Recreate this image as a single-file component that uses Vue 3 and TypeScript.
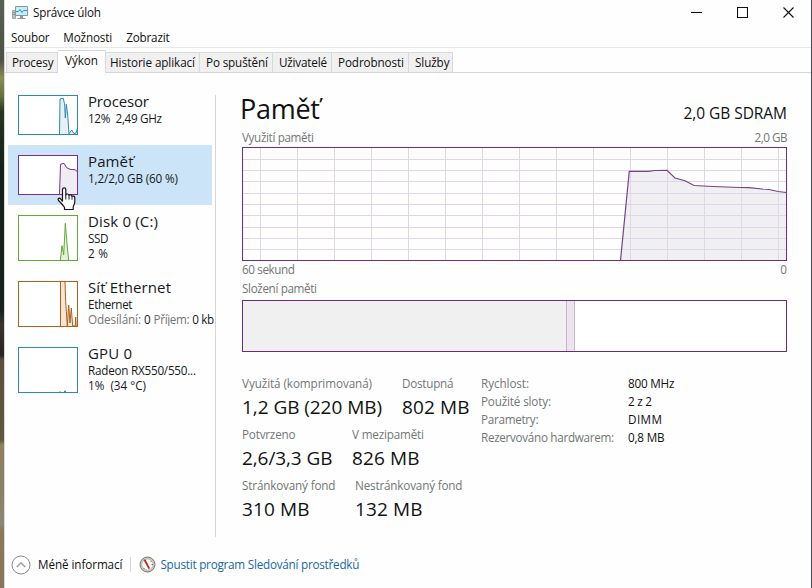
<script setup lang="ts">
import type { Directive } from 'vue'

interface Tab { label: string; width: number; kind: string; active?: boolean }
interface Resource {
  name: string
  nameWidth: number
  lines: { text: string; width: number }[]
  kind: string
  height: number
  line: string
}
interface Fact { label: string; labelWidth: number; value: string; valueWidth: number }

// Spreads the letters of a label over the given advance width.
const vFit: Directive<HTMLElement, number> = {
  mounted(el, binding) {
    const count = Math.max((el.textContent ?? '').length - 1, 1)
    const natural = el.getBoundingClientRect().width
    el.style.letterSpacing = `${(binding.value - natural) / count}px`
  },
}

const tabs: Tab[] = [
  { label: 'Procesy', width: 41.5, kind: 'processes' },
  { label: 'Výkon', width: 33, kind: 'performance', active: true },
  { label: 'Historie aplikací', width: 85, kind: 'history' },
  { label: 'Po spuštění', width: 62, kind: 'startup' },
  { label: 'Uživatelé', width: 48, kind: 'users' },
  { label: 'Podrobnosti', width: 66, kind: 'details' },
  { label: 'Služby', width: 34.5, kind: 'services' },
]

const resources: Resource[] = [
  {
    name: 'Procesor', nameWidth: 61, kind: 'cpu', height: 40,
    lines: [{ text: '12%  2,49 GHz', width: 74 }],
    line: '41.5,39.5 42,4 45.3,3.3 46.7,10 47.3,23 48.3,9.3 49.7,20 51,38.7 53.7,35 56,38.7 58,38 59.5,33',
  },
  {
    name: 'Paměť', nameWidth: 45.5, kind: 'memory', height: 40,
    lines: [{ text: '1,2/2,0 GB (60 %)', width: 90 }],
    line: '41.5,39.5 42.5,9.3 46,8.3 48.7,12.7 52,14.3 57,14.7 59.5,16.7',
  },
  {
    name: 'Disk 0 (C:)', nameWidth: 70, kind: 'disk', height: 46,
    lines: [{ text: 'SSD', width: 20.5 }, { text: '2 %', width: 20 }],
    line: '42.3,45.5 44,30.7 45.7,40 47.3,8.3 49.3,32 50.7,45.5',
  },
  {
    name: 'Síť Ethernet', nameWidth: 83, kind: 'network', height: 46,
    lines: [{ text: 'Ethernet', width: 44.5 }],
    line: '42.5,45.5 42.5,0.5 47,0.5 47.7,20.7 49.3,45 50.7,24 52,42 53.3,27 54.7,45 57.2,45 57.7,36 58.2,45.5',
  },
  {
    name: 'GPU 0', nameWidth: 44, kind: 'gpu', height: 46,
    lines: [{ text: 'Radeon RX550/550...', width: 108 }, { text: '1%  (34 °C)', width: 58 }],
    line: '41,45.5 42,44.5 43,45.5 46,45.5 47,43.7 48,45.5',
  },
]

const gridX = Array.from({ length: 15 }, (_, i) => 18.5 + i * 37)
const gridY = [12.5, 23.5, 34.5, 46.5, 57.5, 68.5, 80.5, 91.5, 102.5]
const usage =
  '378.5,113.5 387.3,24.3 406,24.3 413,23.5 425,23.3 433,31 443,33.7 452,38.5 471,39.5 498,40.5 507,40.7 520,42 527,42.5 536,44.5 544.5,45.5'

const facts: Fact[] = [
  { label: 'Rychlost:', labelWidth: 48, value: '800 MHz', valueWidth: 46.5 },
  { label: 'Použité sloty:', labelWidth: 70, value: '2 z 2', valueWidth: 24 },
  { label: 'Parametry:', labelWidth: 57.5, value: 'DIMM', valueWidth: 34 },
  { label: 'Rezervováno hardwarem:', labelWidth: 133, value: '0,8 MB', valueWidth: 36.5 },
]
</script>

<template>
  <div class="desktop">
    <div class="window">
      <header class="titlebar">
        <svg class="app-icon" width="16" height="14" viewBox="0 0 16 14">
          <path d="M.5 4.5h3v8h-3z" fill="#b9c0c2" stroke="#a0a7a9" />
          <path d="M1 6.5h2M1 8.500h2" stroke="#8d9598" />
          <path d="M3.500.5h12v9h-12z" fill="#c5edf6" stroke="#8797a0" />
          <path d="M4 5.500h2.500l1.500-2 2 3 1.500-2h3.500" fill="none" stroke="#3792b5" />
          <path d="M8 10h3v2h2.500v1h-8v-1H8z" fill="#8d989e" />
        </svg>
        <span v-fit="68" class="caption">Správce úloh</span>
        <div class="controls">
          <svg width="11" height="11" viewBox="0 0 11 11"><path d="M0 5.500h11" /></svg>
          <svg width="11" height="11" viewBox="0 0 11 11"><path d="M.5.5h10v10H.5z" /></svg>
          <svg width="11" height="11" viewBox="0 0 11 11"><path d="M.5.5l10 10M10.500.5l-10 10" /></svg>
        </div>
      </header>

      <nav class="menu">
        <span v-fit="38.5">Soubor</span>
        <span v-fit="49">Možnosti</span>
        <span v-fit="43.5">Zobrazit</span>
      </nav>

      <div class="tabs">
        <div v-for="tab in tabs" :key="tab.kind" class="tab" :class="[tab.kind, { active: tab.active }]">
          <span v-fit="tab.width">{{ tab.label }}</span>
        </div>
      </div>

      <div class="content">
        <aside class="sidebar">
          <div v-for="res in resources" :key="res.kind" class="resource" :class="res.kind">
            <svg class="thumb" width="60" :height="res.height" :viewBox="`0 0 60 ${res.height}`">
              <rect class="thumb-bg" x=".5" y=".5" width="59" :height="res.height - 1" />
              <polygon class="thumb-fill" :points="`${res.line} 59.5,${res.height - 0.5}`" />
              <polyline class="thumb-line" :points="res.line" />
              <rect class="thumb-frame" x=".5" y=".5" width="59" :height="res.height - 1" />
            </svg>
            <div class="resource-text">
              <div class="resource-name"><span v-fit="res.nameWidth">{{ res.name }}</span></div>
              <div v-for="row in res.lines" :key="row.text" class="resource-row">
                <span v-fit="row.width">{{ row.text }}</span>
              </div>
              <div v-if="res.kind === 'network'" class="resource-row traffic">
                <span v-fit="53" class="muted">Odesílání:</span>
                <span>0</span>
                <span v-fit="36" class="muted">Příjem:</span>
                <span v-fit="22">0 kb</span>
              </div>
            </div>
            <svg v-if="res.kind === 'memory'" class="pointer" width="19" height="24" viewBox="0 0 19 24">
              <path
                d="M5.500 14.500V2.500C5.500.4 8.800.4 8.800 2.500V8C9.300 6.500 12 6.700 12 8.500C12.700 7.300 15 7.600 15 9.400C15.800 8.600 17.800 9 17.800 10.800V15C17.800 17 16.500 18 16.200 20V22.500H7.500V20.500C6.500 18.500 4 16 1.500 13.500C.2 11.800 2.100 10.500 3.600 11.800L5.500 14.500"
                fill="#fff" stroke="#15151c" stroke-width="1.200" stroke-linejoin="round"
              />
              <path d="M8.800 8v4.500M12 8.500v4M15 9.400v3.300" fill="none" stroke="#15151c" />
            </svg>
          </div>
        </aside>

        <main class="details-pane">
          <div class="heading">
            <h1><span v-fit="80">Paměť</span></h1>
            <span v-fit="103.500" class="hardware">2,0 GB SDRAM</span>
          </div>
          <div class="row usage-row"><span v-fit="72">Využití paměti</span><span v-fit="33">2,0 GB</span></div>
          <svg class="chart" width="545" height="114" viewBox="0 0 545 114">
            <polygon :points="`${usage} 544.5,113.5`" fill="#f0eff1" />
            <g class="grid">
              <path v-for="x in gridX" :key="'x' + x" :d="`M${x} 1V113`" />
              <path v-for="y in gridY" :key="'y' + y" :d="`M1 ${y}H544`" />
            </g>
            <polyline :points="usage" class="usage-line" />
            <rect x=".5" y=".5" width="544" height="113" class="frame" />
          </svg>
          <div class="row axis-row"><span v-fit="53">60 sekund</span><span>0</span></div>
          <div class="row composition-row"><span v-fit="75">Složení paměti</span></div>
          <div class="composition">
            <div class="in-use"></div>
            <div class="modified"></div>
          </div>

          <div class="numbers">
            <div class="stats">
              <div class="stat-row first">
                <div class="stat"><span v-fit="130" class="stat-label">Využitá (komprimovaná)</span><span v-fit="140" class="stat-value">1,2 GB (220 MB)</span></div>
                <div class="stat"><span v-fit="51.500" class="stat-label">Dostupná</span><span v-fit="67.500" class="stat-value">802 MB</span></div>
              </div>
              <div class="stat-row second">
                <div class="stat"><span v-fit="53.500" class="stat-label">Potvrzeno</span><span v-fit="90.500" class="stat-value">2,6/3,3 GB</span></div>
                <div class="stat"><span v-fit="72" class="stat-label">V mezipaměti</span><span v-fit="67.500" class="stat-value">826 MB</span></div>
              </div>
              <div class="stat-row third">
                <div class="stat"><span v-fit="93.500" class="stat-label">Stránkovaný fond</span><span v-fit="67.500" class="stat-value">310 MB</span></div>
                <div class="stat"><span v-fit="107.500" class="stat-label">Nestránkovaný fond</span><span v-fit="67.500" class="stat-value">132 MB</span></div>
              </div>
            </div>
            <div class="facts">
              <template v-for="fact in facts" :key="fact.label">
                <div class="muted"><span v-fit="fact.labelWidth">{{ fact.label }}</span></div>
                <div><span v-fit="fact.valueWidth">{{ fact.value }}</span></div>
              </template>
            </div>
          </div>
        </main>
      </div>

      <footer class="footer">
        <svg class="fewer" width="20" height="20" viewBox="0 0 20 20">
          <circle cx="10" cy="10" r="9" fill="#fff" stroke="#8a8a8a" />
          <path d="M5.800 12L10 7.800l4.200 4.200" fill="none" stroke="#a3a3a3" stroke-width="1.600" />
        </svg>
        <span v-fit="84.500">Méně informací</span>
        <i class="separator"></i>
        <svg class="gauge" width="17" height="17" viewBox="0 0 17 17">
          <circle cx="8.500" cy="8.500" r="7.500" fill="#cfcecb" stroke="#77756f" />
          <circle cx="8.500" cy="8.500" r="5.700" fill="#faf7f4" stroke="#aaa49d" stroke-width=".8" />
          <path d="M4.500 3.800l2-.4 4.500 8.800-1.500.7z" fill="#ad2b29" />
          <path d="M11.500 5l1 1M12.500 8.500H14M5.500 12l-1 1" stroke="#77756f" />
        </svg>
        <span v-fit="199" class="link">Spustit program Sledování prostředků</span>
      </footer>
    </div>
  </div>
</template>

<style>
body { margin: 0; overflow: hidden; }
</style>

<style scoped>
* { box-sizing: border-box; }
.desktop {
  width: 812px; height: 588px; padding: 0 1px 0 4px;
  background: linear-gradient(#58604f 0, #4d5149 60px, #8b8c55 78px, #65713d 96px, #26351f 112px, #142119 170px, #18211d 310px, #3a3430 325px, #27231e 355px, #5b503c 360px, #62563f 440px, #91805f 445px, #8b8065 490px, #878976 524px, #8b795a 530px, #88765a);
  font: 11.700px/15px "Open Sans", "Noto Sans", sans-serif; color: #111;
}
.window { width: 807px; height: 588px; display: flex; flex-direction: column; background: #fefefe; border-left: 1px solid #d8d8d5; box-shadow: 1px 0 #454b52; }
span { white-space: pre; }
.muted { color: #727776; }

.titlebar { height: 26px; display: flex; padding: 5px 17px 0 7px; }
.app-icon { margin-top: 1px; }
.caption { margin-left: 5px; }
.controls { margin-left: auto; display: flex; gap: 35px; padding-top: 2px; }
.controls svg { fill: none; stroke: #111; stroke-width: 1.100; }
.menu { height: 22px; flex: none; display: flex; gap: 14px; padding: 4px 0 0 6px; border-bottom: 1px solid #e8e8e8; }

.tabs { height: 25px; flex: none; display: flex; align-items: flex-end; padding-left: 1px; border-bottom: 1px solid #d5d5d5; }
.tab { height: 20px; flex: none; padding: 2px 0 0 6px; background: #f0f0f0; border: 1px solid #d9d9d9; border-width: 1px 1px 0 0; }
.processes { width: 52px; padding-left: 5px; border-left-width: 1px; }
.performance.active { width: 48px; height: 23px; margin-bottom: -1px; padding: 2px 0 0 7px; background: #fefefe; }
.history { width: 94px; padding-left: 4px; }
.startup { width: 73px; }
.users { width: 59px; }
.details { width: 77px; }
.services { width: 44px; }

.content { display: flex; height: 464px; flex: none; }
.sidebar { width: 211px; height: 442px; margin-top: 22px; border-right: 1px solid #d5d5d5; padding-left: 3px; }
.resource { position: relative; display: flex; width: 204px; height: 66px; padding: 10px 0 0 10px; gap: 10px; }
.cpu { margin-top: -10px; }
.cpu, .memory { height: 60px; }
.memory { background: #cce4f7; }
.thumb { flex: none; fill: none; }
.thumb-bg { fill: #fff; stroke: none; }
.thumb-frame, .thumb-line { stroke: currentColor; }
.thumb-fill { stroke: none; }
.cpu .thumb, .gpu .thumb { color: #2e89ad; }
.cpu .thumb-fill, .gpu .thumb-fill { fill: #e6f0f5; }
.memory .thumb { color: #7c2c90; }
.memory .thumb-fill { fill: #f0edf2; }
.disk .thumb { color: #65a739; }
.disk .thumb-fill { fill: #e6f1dc; }
.network .thumb { color: #ab611f; }
.network .thumb-fill { fill: #fae5d3; }
.resource-text { margin-top: -3px; color: #15191c; }
.resource-name { height: 18px; line-height: 18px; font-size: 15px; }
.resource-row { height: 15px; line-height: 15px; padding-top: 1px; font-size: 11.700px; }
.traffic { display: flex; width: 127px; gap: 3px; overflow: hidden; }
.pointer { position: absolute; left: 49px; top: 42px; z-index: 2; }

.details-pane { width: 545px; margin-left: 26px; padding-top: 17px; }
.heading { height: 40px; display: flex; justify-content: space-between; }
h1 { margin: 0; margin-left: -2px; font-size: 27px; line-height: 38px; font-weight: 400; }
.hardware { font-size: 15.500px; line-height: 20px; padding-top: 13px; }
.row { display: flex; justify-content: space-between; height: 17px; color: #727776; }
.chart { display: block; }
.grid { stroke: #dfd7e5; fill: none; }
.usage-line { fill: none; stroke: #75418a; stroke-width: 1.200; }
.frame { fill: none; stroke: #702b7d; }
.axis-row { height: 19px; padding-top: 1px; }
.composition-row { height: 20px; padding-top: 1px; }
.composition { height: 52px; display: flex; border: 1px solid #6b2a78; background: #fff; }
.in-use { width: 323px; background: #f0f0f0; }
.modified { width: 9px; background: #ece3ef; border: 1px solid #c9b4d2; border-width: 0 1px; }
.numbers { display: flex; padding-top: 24px; }
.stats { width: 239px; }
.stat-row { display: grid; height: 51px; }
.first { grid-template-columns: 160px auto; }
.second { grid-template-columns: 110px auto; }
.third { grid-template-columns: 113px auto; }
.stat { display: flex; flex-direction: column; align-items: flex-start; }
.stat-label { color: #727776; }
.stat-value { font-size: 19px; line-height: 24px; margin-top: 4px; }
.facts { display: grid; grid-template-columns: 147px auto; grid-auto-rows: 18px; align-content: start; }

.footer { display: flex; height: 51px; padding: 18px 0 0 6px; }
.fewer { margin-right: 7px; }
.footer span { margin-top: 2px; }
.separator { width: 1px; height: 15px; margin: 2px 8px 0 8px; background: #d6d6d6; }
.gauge { margin: 1px 4px 0 0; }
.link { color: #16689f; }
</style>
